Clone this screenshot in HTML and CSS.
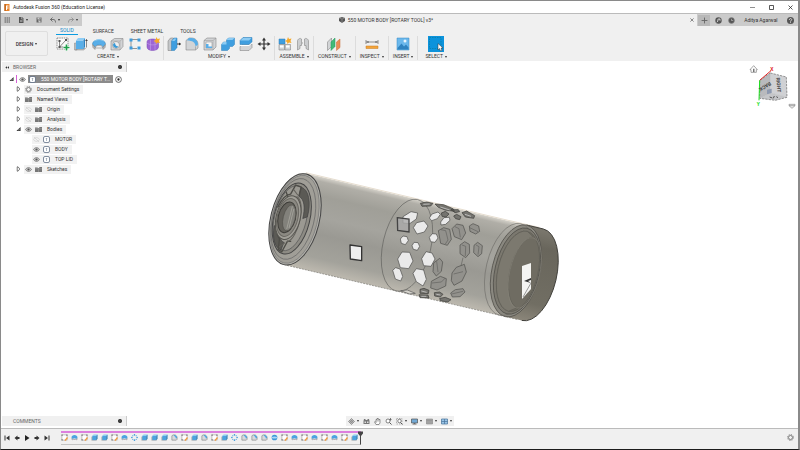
FILE: index.html
```html
<!DOCTYPE html>
<html lang="en">
<head>
    <meta charset="UTF-8">
    <meta name="viewport" content="width=device-width, initial-scale=1.0">
    <title>Autodesk Fusion 360 (Education License)</title>
    <link rel="stylesheet" href="styles.css">
</head>
<body>
    <!-- Icon sprite -->
    <svg class="sprite" aria-hidden="true">
        <symbol id="i-grid" viewBox="0 0 12 12"><path fill="#555" d="M1 1h3v2H1zM5 1h3v2H5zM9 1h3v2H9zM1 5h3v2H1zM5 5h3v2H5zM9 5h3v2H9zM1 9h3v2H1zM5 9h3v2H5zM9 9h3v2H9z"/></symbol>
        <symbol id="i-file" viewBox="0 0 12 12"><path fill="#555" d="M2 0h6l3 3v9H2z"/><path stroke="#ccc" fill="none" d="M7 0v4h4M4 7h5M4 9h5"/></symbol>
        <symbol id="i-save" viewBox="0 0 12 12"><path fill="#666" d="M1 1h10v10H1z"/><path fill="#ccc" d="M3 1h6v4H3zM4 7h5v4H4z"/><path fill="#666" d="M7 2h1v2H7zM5 8h1v3H5z"/></symbol>
        <symbol id="i-undo" viewBox="0 0 12 12"><path fill="none" stroke="#555" stroke-width="1.6" d="M5 1L1 5l4 4M1 5h5c4 0 5 2 5 6"/></symbol>
        <symbol id="i-redo" viewBox="0 0 12 12"><path fill="none" stroke="#888" stroke-width="1.6" d="M7 1l4 4-4 4M11 5H6C2 5 1 7 1 11"/></symbol>
        <symbol id="i-cube" viewBox="0 0 12 12"><path fill="#555" d="M0 2l6-2 6 2v6l-6 4-6-4z"/><path stroke="#aaa" fill="none" d="M0 2l6 2 6-2M6 4v8"/></symbol>
        <symbol id="i-plus" viewBox="0 0 12 12"><path stroke="#666" stroke-width="1.6" d="M6 1v10M1 6h10"/></symbol>
        <symbol id="i-ext" viewBox="0 0 12 12"><circle cx="6" cy="6" r="5.5" fill="#555"/><path fill="none" stroke="#ddd" stroke-width="1.6" d="M3 9l2-2c-1-3 1-5 4-3-2 0-1 2 0 2"/></symbol>
        <symbol id="i-clock" viewBox="0 0 12 12"><circle cx="6" cy="6" r="5" fill="#555" stroke="#888"/><path fill="none" stroke="#ccc" d="M6 3v3h3"/></symbol>
        <symbol id="i-help" viewBox="0 0 12 12"><circle cx="6" cy="6" r="6" fill="#555"/><path fill="none" stroke="#eee" stroke-width="1.4" d="M4 5c0-3 4-3 4-.5C8 6 6 6 6 8M6 9v1.4"/></symbol>

        <symbol id="r-sketch" viewBox="0 0 28 28"><path fill="#fafafa" stroke="#666" stroke-width="1.4" stroke-dasharray="3 1.5" d="M2 2h22v22H2z"/><path fill="none" stroke="#555" stroke-width="1.4" d="M7 20V8M7 20L20 6M7 20h8"/><path fill="#555" d="M5 6h4v4H5zM18 4h4v4h-4zM5 18h4v4H5z"/><path stroke="#fff" stroke-width="6" d="M21 15v13M15 21h13"/><path stroke="#20a04c" stroke-width="3.4" d="M21 15v12M15 21h12"/></symbol>
        <symbol id="r-extrude" viewBox="0 0 28 28"><path fill="#b8babd" stroke="#888" d="M1 12h5v14H1zM3 26l4-3h16l-4 3z"/><path fill="#58aee8" d="M4 7h15v17H4z"/><path fill="#8dccf4" d="M4 7l4-5h14l-3 5z"/><path fill="#2c83c4" d="M19 7l3-5v18l-3 4z"/><path stroke="#555" stroke-width="1.3" d="M25 5v16M23 8l2-3 2 3"/></symbol>
        <symbol id="r-revolve" viewBox="0 0 28 28"><path fill="#58aee8" stroke="#3482b9" d="M1 14C1 3 27 3 27 14l-5 6c-2-6-13-6-16 0z"/><path fill="#8dccf4" d="M4 9C8 2 21 2 24 9 17 5 10 6 4 9z"/><path fill="#f0f0f0" stroke="#777" d="M6 22c2-7 14-7 16 0z"/><path fill="#b8babd" stroke="#777" d="M1 15l5 5v5l-4-4zM27 15l-5 5v5l4-4z"/></symbol>
        <symbol id="r-hole" viewBox="0 0 28 28"><path fill="#d2d4d6" stroke="#777" d="M2 8l7-5h17v16l-6 7H2z"/><path fill="none" stroke="#999" d="M2 8h18v18M20 8l6-5"/><circle cx="12" cy="16" r="7" fill="#eee" stroke="#777"/><path fill="#399ad8" d="M6 16a6 6 0 0 0 11 3c-3 0-7-2-7-7-2 0-4 2-4 4z"/></symbol>
        <symbol id="r-pattern" viewBox="0 0 28 28"><path fill="none" stroke="#777" stroke-width="1.5" d="M22 5H6v18h12"/><path fill="#3d9bdd" d="M3 3h6v6H3zM19 3h6v6h-6zM3 19h6v6H3zM19 19h6v6h-6z"/></symbol>
        <symbol id="r-form" viewBox="0 0 28 28"><path fill="#9c66d4" stroke="#7a45b7" d="M2 10c0-5 7-6 12-6s11 2 11 6v10c0 5-7 7-12 7S2 25 2 20z"/><path fill="none" stroke="#c3a0ea" stroke-width="1.2" d="M2 12c6 5 17 5 23 0M9 5v21M18 5v21"/><path fill="#f7a928" d="M21 0l2 4 5-1-2 5 2 4-5-1-3 3-1-4-4-2 4-2z"/></symbol>
        <symbol id="r-press" viewBox="0 0 28 28"><path fill="#c5c7c9" stroke="#777" d="M2 8l5-6h6v21l-4 4H2z"/><path fill="#3f9edf" stroke="#2d7fb8" d="M9 8l5-6h6v19l-5 6H9z"/><path fill="#8dccf4" d="M10 8l4-5h5l-4 5z"/><path stroke="#333" stroke-width="2" d="M20 14h7"/><path fill="#333" d="M24 11l4 3-4 3z"/></symbol>
        <symbol id="r-fillet" viewBox="0 0 28 28"><path fill="#d2d4d6" stroke="#777" d="M2 26V7l6-5h5c8 0 13 6 13 13v7l-5 4z"/><path fill="#58aee8" d="M8 2h5c8 0 13 6 13 13l-5 4C21 11 15 7 4 7z"/><path fill="none" stroke="#888" d="M21 19v7"/></symbol>
        <symbol id="r-shell" viewBox="0 0 28 28"><path fill="#d2d4d6" stroke="#777" d="M2 7l6-5h18v18l-6 6H2z"/><path fill="#f5f5f5" stroke="#888" d="M6 10h12v12H6z"/><path fill="#58aee8" d="M6 14h5v5h7v3H6z"/><path fill="none" stroke="#999" d="M2 7h18v19M20 7l6-5"/></symbol>
        <symbol id="r-combine" viewBox="0 0 28 28"><path fill="#3f9edf" stroke="#2d7fb8" d="M1 15l4-5h6V6l4-4h12v13l-4 4h-6v4l-4 4H1z"/><path fill="#8dccf4" d="M11 6l4-4h12l-4 4zM1 15l4-5h6v5z"/></symbol>
        <symbol id="r-offset" viewBox="0 0 28 28"><path fill="#d2d4d6" stroke="#777" d="M2 19l6-5h18v7l-6 6H2z"/><path fill="#3f9edf" stroke="#2d7fb8" d="M2 7l6-6h18v9l-6 5H2z"/><path fill="#8dccf4" d="M3 7l5-5h17l-5 5z"/><path fill="#fff" d="M2 16h18l6-5v2l-6 5H2z"/></symbol>
        <symbol id="r-move" viewBox="0 0 28 28"><path stroke="#333" stroke-width="2.4" d="M14 4v20M4 14h20"/><path fill="#333" d="M14 1l4 6h-8zM14 27l4-6h-8zM1 14l6-4v8zM27 14l-6-4v8z"/></symbol>
        <symbol id="r-assemble" viewBox="0 0 28 28"><path fill="#3f9edf" stroke="#2d7fb8" d="M2 4h12v10H2z"/><path fill="#d2d4d6" stroke="#777" d="M2 15h11v11H2zM14 15h11v11H14z"/><path fill="#fff" d="M4 17h7v4H4zM16 17h7v4h-7z"/><path fill="#f7a928" d="M20 0l2 4 5-1-2 5 2 4-5-1-3 3-1-4-4-2 4-2z"/></symbol>
        <symbol id="r-joint" viewBox="0 0 28 28"><path fill="#ccced0" stroke="#777" d="M3 26V8c0-4 6-7 8-4v13H8v6zM25 26V8c0-4-6-7-8-4v13h3v6z"/><path stroke="#555" stroke-dasharray="2 2" d="M12 12h4"/></symbol>
        <symbol id="r-construct" viewBox="0 0 28 28"><path fill="#d2d4d6" stroke="#777" d="M1 10l8-8v17l-8 8z"/><path fill="#42b978" stroke="#259a59" d="M8 10l8-8v17l-8 8z"/><path fill="#eb8c54" stroke="#c86d38" d="M19 10l7-6v17l-7 6z"/></symbol>
        <symbol id="r-measure" viewBox="0 0 28 28"><path stroke="#666" stroke-width="1.4" d="M2 6v8M26 6v8M2 10h24"/><path fill="#555" d="M3 10l4-2v4zM25 10l-4-2v4z"/><path fill="#f2a43a" stroke="#c87b1c" d="M2 18h24v5H2z"/></symbol>
        <symbol id="r-image" viewBox="0 0 28 28"><path fill="#6bb8ec" stroke="#368bc7" d="M2 2h24v24H2z"/><path fill="#2f83c0" d="M3 22l8-9 5 6 4-4 5 6v4H3z"/><circle cx="18" cy="8" r="3" fill="#e9f6fd"/></symbol>
        <symbol id="r-select" viewBox="0 0 32 32"><path fill="#0c93dc" d="M0 0h32v32H0z"/><path fill="none" stroke="#077a9f" stroke-width="1.3" stroke-dasharray="3 2" d="M3 3h23v22H3z"/><path fill="#fff" stroke="#333" d="M20 15v13l3-3 2 5 3-1-2-5h4z"/></symbol>

        <symbol id="b-eye" viewBox="0 0 14 10"><path fill="#ccc" stroke="#666" stroke-width="1.4" d="M1 5c3-5 9-5 12 0-3 5-9 5-12 0z"/><circle cx="7" cy="5" r="2.2" fill="#555"/></symbol>
        <symbol id="b-hidden" viewBox="0 0 14 10"><path fill="none" stroke="#ccc" stroke-width="1.3" d="M1 5c3-5 9-5 12 0-3 5-9 5-12 0zM2 0l10 10"/></symbol>
        <symbol id="b-folder" viewBox="0 0 14 12"><path fill="#777" d="M0 2h5l1 1h2l1-2h5v10H0z"/><path stroke="#aaa" d="M0 4.500h14M7 5v6"/></symbol>
        <symbol id="b-gear" viewBox="0 0 14 14"><circle cx="7" cy="7" r="4" fill="none" stroke="#666" stroke-width="1.6"/><circle cx="7" cy="7" r="6" fill="none" stroke="#666" stroke-width="1.8" stroke-dasharray="2 2.700"/></symbol>
        <symbol id="b-body" viewBox="0 0 14 14"><rect x="1" y="1" width="12" height="12" rx="3" fill="#fff" stroke="#4d5f78" stroke-width="1.4"/><path stroke="#678" d="M7 5v5M5.500 5h3"/></symbol>
        <symbol id="b-closed" viewBox="0 0 10 14"><path fill="#fff" stroke="#333" stroke-width="1.5" d="M2 2h2l4 5-4 5H2z"/></symbol>
        <symbol id="b-open" viewBox="0 0 12 12"><path fill="#333" d="M11 1v10H1z"/><path fill="#ddd" d="M8 5.500v3.300H5z"/></symbol>
        <symbol id="b-dot" viewBox="0 0 12 12"><circle cx="6" cy="6" r="5" fill="#fff" stroke="#444" stroke-width="1.3"/><circle cx="6" cy="6" r="2" fill="#222"/></symbol>
        <symbol id="b-pin" viewBox="0 0 12 12"><circle cx="6" cy="6" r="6" fill="#222"/><path stroke="#bbb" d="M4 6h4M6 4v4"/></symbol>

        <symbol id="t-sketch" viewBox="0 0 16 16"><path fill="#fff" stroke="#999" stroke-width="1.3" d="M2 2h12v12H2z"/><path fill="#777" d="M1 1h3v3H1zM12 1h3v3h-3zM1 12h3v3H1z"/><path stroke="#f29a3b" stroke-width="3" d="M9 15l6-7"/></symbol>
        <symbol id="t-extrude" viewBox="0 0 16 16"><path fill="#aaa" d="M1 6h12v9H1z"/><path fill="#4ba3e0" d="M3 4h9v10H3z"/><path fill="#83c6f2" d="M3 4l3-3h9l-3 3z"/><path fill="#2f80ba" d="M12 4l3-3v10l-3 3z"/></symbol>
        <symbol id="t-revolve" viewBox="0 0 16 16"><path fill="#4ba3e0" d="M1 8c0-8 14-8 14 0l-3 4c-2-3-6-3-8 0z"/><path fill="#999ca0" d="M1 9l3 3v3l-3-3zM15 9l-3 3v3l3-3zM4 13c2-3 6-3 8 0z"/></symbol>
        <symbol id="t-pattern" viewBox="0 0 16 16"><g fill="#3c98d9"><circle cx="8" cy="2" r="1.800"/><circle cx="8" cy="14" r="1.800"/><circle cx="2" cy="8" r="1.800"/><circle cx="14" cy="8" r="1.800"/><circle cx="4" cy="4" r="1.400"/><circle cx="12" cy="4" r="1.400"/><circle cx="4" cy="12" r="1.400"/><circle cx="12" cy="12" r="1.400"/></g></symbol>
        <symbol id="t-fillet" viewBox="0 0 16 16"><path fill="#d8dadc" stroke="#777" stroke-width="1.3" d="M2 14V4l3-2h3c4 0 6 4 6 7v3l-2 2z"/><path fill="#4ba5e1" d="M7 2c5 0 7 4 7 7l-3 1c0-3-2-5-5-6z"/></symbol>
        <symbol id="t-sphere" viewBox="0 0 16 16"><circle cx="8" cy="8" r="6.500" fill="#3c98d9"/><path fill="#a9d8f5" d="M2 7c3-2 9-2 12 0v2c-3 2-9 2-12 0z"/></symbol>
        <symbol id="p-start" viewBox="0 0 12 12"><path fill="#333" d="M1 1h2v10H1zM11 1v10L4 6z"/></symbol>
        <symbol id="p-prev" viewBox="0 0 12 12"><path fill="#333" d="M7 1v3h4v4H7v3L1 6z"/></symbol>
        <symbol id="p-play" viewBox="0 0 12 12"><path fill="#222" d="M2 0l9 6-9 6z"/></symbol>
        <symbol id="p-next" viewBox="0 0 12 12"><path fill="#333" d="M5 1v3H1v4h4v3l6-5z"/></symbol>
        <symbol id="p-end" viewBox="0 0 12 12"><path fill="#333" d="M9 1h2v10H9zM1 1v10l7-5z"/></symbol>

        <symbol id="n-orbit" viewBox="0 0 14 14"><path fill="none" stroke="#666" stroke-width="1.3" d="M7 1l6 6-6 6-6-6z"/><path stroke="#666" d="M7 3v8M3 7h8"/><circle cx="7" cy="7" r="2.500" fill="#aaa" stroke="#666"/></symbol>
        <symbol id="n-look" viewBox="0 0 14 14"><path fill="#777" d="M2 2h3v2h4V2h3l1 4v6H1V6z"/><path fill="#ddd" d="M3 7h3v3H3zM8 7h3v3H8z"/></symbol>
        <symbol id="n-pan" viewBox="0 0 14 14"><path fill="#fff" stroke="#555" stroke-width="1.200" d="M4 13L1 8l1-1 2 2V3h2V1h2v1h2v1h2v7l-2 3z"/><path stroke="#777" d="M6 3v4M8 2v5M10 3v4"/></symbol>
        <symbol id="n-zoom" viewBox="0 0 14 14"><circle cx="6" cy="6" r="4" fill="#fff" stroke="#555" stroke-width="1.400"/><path stroke="#555" stroke-width="2" d="M9 9l4 4"/><path stroke="#555" d="M11 1v5M9 3l2-2 2 2"/></symbol>
        <symbol id="n-fit" viewBox="0 0 14 14"><path fill="none" stroke="#777" stroke-dasharray="3 2" d="M1 1h11v11H1z"/><circle cx="7" cy="6" r="3.500" fill="#fff" stroke="#555" stroke-width="1.400"/><path stroke="#555" stroke-width="2" d="M9 9l4 4"/></symbol>
        <symbol id="n-display" viewBox="0 0 14 14"><path fill="#73a9d4" stroke="#555" stroke-width="1.400" d="M1 2h12v8H1z"/><path fill="#666" d="M5 10h4v2h2v1H3v-1h2z"/></symbol>
        <symbol id="n-gridset" viewBox="0 0 14 14"><path fill="#aaa" stroke="#777" d="M1 2h12v10H1z"/><path stroke="#888" d="M1 5h12M1 8h12"/></symbol>
        <symbol id="n-views" viewBox="0 0 14 14"><path fill="#9bc5e7" stroke="#46729b" stroke-width="1.400" d="M1 2h12v10H1zM7 2v10M1 7h12"/></symbol>
    </svg>

    <div class="app">
        <header class="title-bar">
            <svg class="logo" viewBox="0 0 12 14"><path fill="#e8832a" d="M1 0h10v14H1z"/><path fill="#fff" d="M4 3h5v2H6v2h3v2H6v3H4z"/><path fill="#a9520f" d="M1 0h2v14H1z"/></svg>
            <h1 class="app-name">Autodesk Fusion 360 (Education License)</h1>
            <div class="window-btns">
                <button aria-label="Minimize"><svg viewBox="0 0 10 10"><path stroke="#222" d="M0 5h10"/></svg></button>
                <button aria-label="Maximize"><svg viewBox="0 0 10 10"><path fill="none" stroke="#222" stroke-width="1.500" d="M1 1h8v8H1z"/></svg></button>
                <button aria-label="Close"><svg viewBox="0 0 10 10"><path stroke="#222" stroke-width="1.500" d="M1 1l8 8M9 1L1 9"/></svg></button>
            </div>
        </header>

        <div class="doc-bar">
            <div class="quick">
                <button aria-label="Data panel"><svg><use href="#i-grid"/></svg></button>
                <button class="has-menu" aria-label="File"><svg><use href="#i-file"/></svg></button>
                <button aria-label="Save"><svg><use href="#i-save"/></svg></button>
                <button class="has-menu" aria-label="Undo"><svg><use href="#i-undo"/></svg></button>
                <button class="has-menu" aria-label="Redo"><svg><use href="#i-redo"/></svg></button>
            </div>
            <div class="doc-tab">
                <span class="doc-name"><svg><use href="#i-cube"/></svg>550 MOTOR BODY [ROTARY TOOL] v3*</span>
                <button class="doc-close" aria-label="Close tab"><svg viewBox="0 0 10 10"><path stroke="#444" stroke-width="1.500" d="M1 1l8 8M9 1L1 9"/></svg></button>
            </div>
            <div class="account">
                <button class="add" aria-label="New design"><svg><use href="#i-plus"/></svg></button>
                <button aria-label="Extensions"><svg><use href="#i-ext"/></svg></button>
                <button aria-label="Job status"><svg><use href="#i-clock"/></svg></button>
                <a class="user" href="#">Aditya Agarwal</a>
                <button aria-label="Help"><svg><use href="#i-help"/></svg></button>
            </div>
        </div>

        <div class="ribbon">
            <button class="workspace-btn has-menu">DESIGN</button>
            <div class="ribbon-main">
                <nav class="tabs">
                    <button class="tab active">SOLID</button>
                    <button class="tab">SURFACE</button>
                    <button class="tab">SHEET METAL</button>
                    <button class="tab">TOOLS</button>
                </nav>
                <div class="groups">
                    <div class="group">
                        <div class="tools">
                            <button aria-label="Create sketch"><svg><use href="#r-sketch"/></svg></button>
                            <button aria-label="Extrude"><svg><use href="#r-extrude"/></svg></button>
                            <button aria-label="Revolve"><svg><use href="#r-revolve"/></svg></button>
                            <button aria-label="Hole"><svg><use href="#r-hole"/></svg></button>
                            <button aria-label="Pattern"><svg><use href="#r-pattern"/></svg></button>
                            <button aria-label="Create form"><svg><use href="#r-form"/></svg></button>
                        </div>
                        <button class="group-name has-menu">CREATE</button>
                    </div>
                    <div class="group">
                        <div class="tools">
                            <button aria-label="Press pull"><svg><use href="#r-press"/></svg></button>
                            <button aria-label="Fillet"><svg><use href="#r-fillet"/></svg></button>
                            <button aria-label="Shell"><svg><use href="#r-shell"/></svg></button>
                            <button aria-label="Combine"><svg><use href="#r-combine"/></svg></button>
                            <button aria-label="Offset face"><svg><use href="#r-offset"/></svg></button>
                            <button aria-label="Move"><svg><use href="#r-move"/></svg></button>
                        </div>
                        <button class="group-name has-menu">MODIFY</button>
                    </div>
                    <div class="group">
                        <div class="tools">
                            <button aria-label="New component"><svg><use href="#r-assemble"/></svg></button>
                            <button aria-label="Joint"><svg><use href="#r-joint"/></svg></button>
                        </div>
                        <button class="group-name has-menu">ASSEMBLE</button>
                    </div>
                    <div class="group">
                        <div class="tools"><button aria-label="Offset plane"><svg><use href="#r-construct"/></svg></button></div>
                        <button class="group-name has-menu">CONSTRUCT</button>
                    </div>
                    <div class="group">
                        <div class="tools"><button aria-label="Measure"><svg><use href="#r-measure"/></svg></button></div>
                        <button class="group-name has-menu">INSPECT</button>
                    </div>
                    <div class="group">
                        <div class="tools"><button aria-label="Insert image"><svg><use href="#r-image"/></svg></button></div>
                        <button class="group-name has-menu">INSERT</button>
                    </div>
                    <div class="group">
                        <div class="tools selected"><button aria-label="Select"><svg><use href="#r-select"/></svg></button></div>
                        <button class="group-name has-menu">SELECT</button>
                    </div>
                </div>
            </div>
        </div>

        <main class="workspace">
            <!-- Motor body model -->
            <svg class="model" viewBox="1 61 797 367" role="img" aria-label="Motor body model">
                <defs>
                    <linearGradient id="shell" x1="0" y1="0" x2="0" y2="1">
                        <stop offset="0" stop-color="#d5d2ca"/>
                        <stop offset=".05" stop-color="#b0aea7"/>
                        <stop offset=".2" stop-color="#a09f98"/>
                        <stop offset=".42" stop-color="#a5a49e"/>
                        <stop offset=".6" stop-color="#9a9993"/>
                        <stop offset=".85" stop-color="#a3a29b"/>
                        <stop offset="1" stop-color="#bdb9af"/>
                    </linearGradient>
                    <linearGradient id="lid" x1="0" y1="0" x2="0" y2="1">
                        <stop offset="0" stop-color="#7b786e"/>
                        <stop offset=".2" stop-color="#69665c"/>
                        <stop offset=".8" stop-color="#716e63"/>
                        <stop offset="1" stop-color="#8b867a"/>
                    </linearGradient>
                </defs>
                <g transform="translate(295 219) rotate(13.200)">
                    <path fill="url(#shell)" d="M0-47H227A24 47 0 0 1 227 47H0A24 47 0 0 1 0-47z"/>
                    <path fill="none" stroke="#e6ddcf" d="M0-47.500H240"/>
                    <path fill="none" stroke="#77756e" stroke-dasharray="2 1" stroke-width=".6" d="M0 47H240"/>
                    <path fill="url(#lid)" d="M227-47H244A24 47 0 0 1 244 47H227z"/>
                    <path fill="none" stroke="#3e3d38" stroke-width=".9" d="M227-47H244A24 47 0 0 1 244 47"/>
                    <ellipse cx="227" rx="24" ry="47" fill="#8a8880" stroke="#55534d" stroke-width=".8"/>
                    <ellipse cx="221" rx="24" ry="47" fill="none" stroke="#6e6d68" stroke-width=".6"/>
                    <ellipse cx="228" rx="22" ry="44" fill="#7b786f" stroke="#4b4a45" stroke-width=".7"/>
                    <ellipse cx="229" rx="20" ry="41" fill="#6f6c62" stroke="#5e5c55" stroke-width=".7"/>
                    <path fill="#7c796f" stroke="#5f5d56" stroke-width=".6" d="M229-41A20 41 0 0 0 229 41L236 36A18 37 0 0 1 236-37z"/>
                    <ellipse cx="236" rx="15" ry="36" fill="none" stroke="#878479" stroke-width=".6"/>
                    <ellipse cx="115" rx="24" ry="47" fill="none" stroke="#5d5d5a" stroke-width=".6"/>
                </g>
                <!-- Window in the lid -->
                <path fill="#f4f4f2" d="M522 266l9-3v26l-9 10z"/>
                <path fill="#333" d="M524 281l7-3v2l-3 1 3 2z"/>
                <path fill="none" stroke="#555" stroke-width=".6" d="M523 297l8-14"/>

                <!-- Motor end -->
                <svg x="260" y="160" width="150" height="120" viewBox="0 0 450 360">
                    <g fill="none" transform="rotate(14 105 178)">
                        <ellipse cx="105" cy="178" rx="73" ry="140" fill="#b3b2ac" stroke="#444" stroke-width="3"/>
                        <ellipse cx="104" cy="178" rx="68" ry="135" fill="#a19f98" stroke="#777" stroke-width="2"/>
                        <ellipse cx="100" cy="178" rx="62" ry="124" fill="#a09e97" stroke="#666" stroke-width="2"/>
                        <ellipse cx="95" cy="178" rx="54" ry="109" fill="#8d8b84" stroke="#444" stroke-width="3"/>
                        <ellipse cx="91" cy="178" rx="48" ry="100" fill="#9b9992" stroke="#555" stroke-width="2"/>
                        <path fill="#5b5a55" stroke="#444" stroke-width="2" d="M99 80c25 0 42 40 40 82l-12 8c0-30-8-58-28-62zM49 212c4 40 17 62 38 65l2-24c-14-2-22-22-25-46z"/>
                        <path stroke="#4d4c47" stroke-width="4" d="M59 104l13 20M46 156c5-25 15-44 28-48l8-30 18 2v27M64 234l10 12 4 32 12 4 9-35 11-2"/>
                        <path stroke="#64625c" stroke-width="3" d="M93 110c34 8 36 122 5 140M79 92l17 14M79 270l14-17"/>
                        <ellipse cx="84" cy="178" rx="36" ry="67" fill="#a09e97" stroke="#55544f" stroke-width="3"/>
                        <ellipse cx="82" cy="178" rx="31" ry="58" fill="#8b8982" stroke="#6b6963" stroke-width="3"/>
                        <ellipse cx="80" cy="178" rx="26" ry="47" fill="#65635d" stroke="#3d3c38" stroke-width="3"/>
                        <ellipse cx="87" cy="178" rx="18" ry="40" fill="#82817b" stroke="#53514c" stroke-width="2"/>
                        <path stroke="#aeaca4" stroke-width="2" d="M88 142v70M94 148v60"/>
                    </g>
                    <path fill="#eee" stroke="#333" stroke-width="4" stroke-linejoin="round" d="M270 255l35 5v42l-34-5z"/>
                </svg>

                <!-- Vent pattern -->
                <svg x="375" y="190" width="120" height="120" viewBox="0 0 360 360">
                    <g fill="#eaeaea" stroke="#4a4a48" stroke-width="2">
                        <path d="M84 80l24-15 20 4-4 18-20 14-20-2z"/>
                        <path d="M115 113l10-15 22-5 12 15-11 18-22 6z"/>
                        <path d="M76 147l8-9 12 2 4 12-9 12-12-4z"/>
                        <path d="M111 167l6-10 12 1 5 11-7 12-12-3z"/>
                        <path d="M68 207l13-21 23 1 10 26-13 23-25-3z"/>
                        <path d="M140 206l13-21 18 4 9 18-12 22-22-2z"/>
                        <path d="M53 241l9-8 13 4 8 22-6 14-16-6z"/>
                        <path d="M114 250l10-14 22 4 8 28-10 20-20-13z"/>
                        <path d="M163 142l9-11 12 1 5 12-9 13-13-2z"/>
                        <path d="M163 84l8-12 18-6 7 7-9 13-17 6z"/>
                        <path d="M197 96l10-13 16-1 2 9-13 12-14 2z"/>
                    </g>
                    <path fill="#aaa" fill-opacity=".8" stroke="#444" stroke-width="4" d="M67 83l35 4v39l-34-5z"/>
                    <g fill="#92918c" stroke="#4d4d4a" stroke-width="2">
                        <path d="M190 122l16-9 18 5 5 30-12 18-20-6z"/>
                        <path d="M231 116l14-14 19 4 8 23-12 20-22-9z"/>
                        <path d="M283 108l11-7 17 7 3 16-12 8-17-8z"/>
                        <path d="M255 165l14-10 14 8 1 26-12 14-17-12z"/>
                        <path d="M297 166l11-9 14 10-2 24-11 9-13-12z"/>
                        <path d="M231 249l13-17 24-9 6 23-13 27-24 13-8-14z"/>
                        <path d="M176 219l18-14 9 11-4 28-15 14-10-13z"/>
                        <path d="M169 274l27-15 18 7-2 22-26 12-19-6z"/>
                        <path d="M227 309l14-10 23-3 6 10-15 14-23 1z"/>
                    </g>
                    <g fill="none" stroke="#62625f" stroke-width="2">
                        <path d="M198 119l14 3 7 28-8 12M240 110l12 6 4 26M261 165l11 4-1 29M303 165l9 5-3 24M236 252l28-7M185 214l4 32M171 279l28-3 12-12M264 203l-6 25M284 113l25 12M230 312l34-8"/>
                    </g>
                    <g fill="#75746f" stroke="#3a3a37" stroke-width="2">
                        <path d="M136 40l19-4 19 4-7 8-26 1zM180 42l26 2 28 12 4 8-28-4-20-8zM199 69l12-5 11 8-9 9-12-2zM228 59h22l4 6-14 3zM261 68l14-5 24 14-3 8-25-4zM236 78l9-5 13 7-4 9-12-3z"/>
                        <path d="M135 298l12-3 15 6-2 10-25-1zM178 308l16-2 10 7-8 8-17-3zM194 325l17-3 17 7-10 7-22-4zM132 314l27 1 3 9-27-1z"/>
                    </g>
                    <path fill="#d4d2cb" stroke="#555" stroke-width="2" d="M77 302l20-2 24 10-18 2z"/>
                    <path fill="none" stroke="#ddd" stroke-width="2" d="M145 43l19-1M196 51l28 9M270 73l18 6M139 303l16 4M184 313l12 2M139 319h15"/>
                </svg>
            </svg>

            <aside class="browser">
                <div class="panel-head">
                    <svg class="chev" viewBox="0 0 12 8"><path fill="#333" d="M6 0v8L1 4zM12 0v8L7 4z"/></svg>
                    <h2>BROWSER</h2>
                    <button aria-label="Pin browser"><svg><use href="#b-pin"/></svg></button>
                </div>
                <ul class="tree">
                    <li class="row root">
                        <svg class="arrow"><use href="#b-open"/></svg>
                        <span class="mark"></span>
                        <svg class="icon"><use href="#b-eye"/></svg>
                        <span class="pill"><svg class="icon"><use href="#b-body"/></svg><span>550 MOTOR BODY [ROTARY T...</span></span>
                        <svg class="icon"><use href="#b-dot"/></svg>
                    </li>
                    <li class="row"><svg class="arrow"><use href="#b-closed"/></svg><span class="pill"><svg class="icon"><use href="#b-gear"/></svg><span>Document Settings</span></span></li>
                    <li class="row"><svg class="arrow"><use href="#b-closed"/></svg><span class="pill"><svg class="icon"><use href="#b-folder"/></svg><span>Named Views</span></span></li>
                    <li class="row"><svg class="arrow"><use href="#b-closed"/></svg><span class="pill"><svg class="icon"><use href="#b-hidden"/></svg><svg class="icon"><use href="#b-folder"/></svg><span>Origin</span></span></li>
                    <li class="row"><svg class="arrow"><use href="#b-closed"/></svg><span class="pill"><svg class="icon"><use href="#b-hidden"/></svg><svg class="icon"><use href="#b-folder"/></svg><span>Analysis</span></span></li>
                    <li class="row"><svg class="arrow"><use href="#b-open"/></svg><span class="pill"><svg class="icon"><use href="#b-eye"/></svg><svg class="icon"><use href="#b-folder"/></svg><span>Bodies</span></span></li>
                    <li class="row child"><span class="pill"><svg class="icon"><use href="#b-hidden"/></svg><svg class="icon"><use href="#b-body"/></svg><span>MOTOR</span></span></li>
                    <li class="row child"><span class="pill"><svg class="icon"><use href="#b-eye"/></svg><svg class="icon"><use href="#b-body"/></svg><span>BODY</span></span></li>
                    <li class="row child"><span class="pill"><svg class="icon"><use href="#b-eye"/></svg><svg class="icon"><use href="#b-body"/></svg><span>TOP LID</span></span></li>
                    <li class="row"><svg class="arrow"><use href="#b-closed"/></svg><span class="pill"><svg class="icon"><use href="#b-eye"/></svg><svg class="icon"><use href="#b-folder"/></svg><span>Sketches</span></span></li>
                </ul>
            </aside>

            <!-- View cube -->
            <svg class="view-cube" viewBox="0 0 150 150">
                <path fill="#fff" stroke="#777" stroke-width="2" d="M9 26l11-12 11 12h-3v8H12v-8z"/>
                <path fill="#333" d="M19 23h3v10h-3z"/>
                <path fill="#b9babd" d="M38 58l32-22v60l-32 16z"/>
                <path fill="#d0d1d4" d="M70 36l48 12 2 61-50-13z"/>
                <path fill="#c5c6c9" d="M38 112l32-16 50 13-35 9z"/>
                <path fill="none" stroke="#666" stroke-width="2" stroke-dasharray="7 3" d="M70 36l48 12 2 61-35 9-47-6V58z"/>
                <path fill="none" stroke="#aaa" d="M70 36v60l-32 16M70 96l50 13"/>
                <path fill="#8d99b0" d="M60 86l14-3v13l-14 4z"/>
                <path fill="none" stroke="#e02424" stroke-width="3" d="M38 58l34-29"/>
                <path fill="none" stroke="#1de01d" stroke-width="3" d="M38 58l-2 60"/>
                <text class="axis-x" x="70" y="30">X</text>
                <text class="axis-y" x="29" y="136">Y</text>
                <text class="face" transform="translate(88 50) rotate(86)">RIGHT</text>
                <text class="face" transform="translate(68 62) rotate(148)">BACK</text>
                <path fill="none" stroke="#555" stroke-width="3" d="M68 108l8 3M82 105l-3 7M88 107l5 3"/>
                <path fill="#eee" stroke="#888" stroke-width="2" d="M126 130h18v4l-9 8-9-8zM126 134h18"/>
            </svg>

            <div class="comments panel-head">
                <h2>COMMENTS</h2>
                <button aria-label="Add comment"><svg><use href="#b-pin"/></svg></button>
            </div>

            <div class="nav-bar">
                <button class="has-menu" aria-label="Orbit"><svg><use href="#n-orbit"/></svg></button>
                <button aria-label="Look at"><svg><use href="#n-look"/></svg></button>
                <button aria-label="Pan"><svg><use href="#n-pan"/></svg></button>
                <button aria-label="Zoom"><svg><use href="#n-zoom"/></svg></button>
                <button class="has-menu" aria-label="Fit"><svg><use href="#n-fit"/></svg></button>
                <button class="has-menu" aria-label="Display settings"><svg><use href="#n-display"/></svg></button>
                <button class="has-menu" aria-label="Grid and snaps"><svg><use href="#n-gridset"/></svg></button>
                <button class="has-menu" aria-label="Viewports"><svg><use href="#n-views"/></svg></button>
            </div>
        </main>

        <footer class="timeline">
            <div class="playback">
                <button aria-label="Go to start"><svg><use href="#p-start"/></svg></button>
                <button aria-label="Step back"><svg><use href="#p-prev"/></svg></button>
                <button aria-label="Play"><svg><use href="#p-play"/></svg></button>
                <button aria-label="Step forward"><svg><use href="#p-next"/></svg></button>
                <button aria-label="Go to end"><svg><use href="#p-end"/></svg></button>
            </div>
            <div class="features">
                <svg><use href="#t-sketch"/></svg>
                <svg><use href="#t-revolve"/></svg>
                <svg><use href="#t-sketch"/></svg>
                <svg><use href="#t-extrude"/></svg>
                <svg><use href="#t-extrude"/></svg>
                <svg><use href="#t-sketch"/></svg>
                <svg><use href="#t-revolve"/></svg>
                <svg><use href="#t-pattern"/></svg>
                <svg><use href="#t-extrude"/></svg>
                <svg><use href="#t-extrude"/></svg>
                <svg><use href="#t-extrude"/></svg>
                <svg><use href="#t-fillet"/></svg>
                <svg><use href="#t-sketch"/></svg>
                <svg><use href="#t-extrude"/></svg>
                <svg><use href="#t-fillet"/></svg>
                <svg><use href="#t-sketch"/></svg>
                <svg><use href="#t-extrude"/></svg>
                <svg><use href="#t-pattern"/></svg>
                <svg><use href="#t-fillet"/></svg>
                <svg><use href="#t-fillet"/></svg>
                <svg><use href="#t-fillet"/></svg>
                <svg><use href="#t-sphere"/></svg>
                <svg><use href="#t-sketch"/></svg>
                <svg><use href="#t-revolve"/></svg>
                <svg><use href="#t-sketch"/></svg>
                <svg><use href="#t-revolve"/></svg>
                <svg><use href="#t-sketch"/></svg>
                <svg><use href="#t-revolve"/></svg>
                <svg><use href="#t-sketch"/></svg>
                <svg><use href="#t-extrude"/></svg>
            </div>
            <svg class="marker" viewBox="0 0 10 26"><path fill="#444" d="M0 0h10v4L6 9v17H4V9L0 4z"/></svg>
            <button class="settings" aria-label="Timeline settings"><svg><use href="#b-gear"/></svg></button>
        </footer>
    </div>
</body>
</html>
```

FILE: styles.css
```css
* { margin: 0; padding: 0; box-sizing: border-box; }
body {
    font-family: Roboto, "Liberation Sans", sans-serif;
    font-size: 5px;
    line-height: 8px;
    color: #333;
    background: #fff;
}

button {
    display: flex;
    align-items: center;
    justify-content: center;
    border: none;
    background: none;
    font: inherit;
    color: inherit;
    cursor: pointer;
}

h1, h2 { font-size: 5px; font-weight: 400; }
svg { display: block; flex: none; }
.sprite { display: none; }

.app {
    display: flex;
    flex-direction: column;
    min-height: 100vh;
    border: 1px solid #8a8a8a;
    border-right-width: 2px;
    border-bottom-color: #1c1c1c;
}

/* small drop-down arrow */
.has-menu::after {
    content: "";
    margin-left: 2px;
    border: 1px solid transparent;
    border-top: 2px solid #333;
    border-bottom: none;
}

.title-bar {
    display: flex;
    align-items: center;
    height: 12px;
    padding: 0 5px 0 3px;
}
.logo { width: 6px; height: 7px; margin-right: 3px; }
.app-name { flex: 1; color: #222; }
.window-btns { display: flex; gap: 14px; }
.window-btns svg { width: 5px; height: 5px; }

.doc-bar {
    display: flex;
    height: 13px;
    border-top: 1px solid #bbb;
    background: #cbcbcb;
}
.quick {
    display: flex;
    align-items: center;
    gap: 8px;
    width: 81px;
    padding-left: 3px;
}
.quick svg { width: 6px; height: 6px; }
.doc-tab {
    display: flex;
    flex: 1;
    align-items: center;
    padding-right: 3px;
    background: #f0f0f0;
}
.doc-name {
    display: flex;
    flex: 1;
    align-items: center;
    justify-content: center;
    gap: 3px;
}
.doc-name svg { width: 6px; height: 6px; }
.doc-close svg { width: 4px; height: 4px; }
.account {
    display: flex;
    align-items: center;
    justify-content: space-between;
    width: 101px;
    padding: 0 4px 0 1px;
}
.account svg { width: 7px; height: 7px; }
.account .add { width: 12px; height: 11px; background: #b8b8b8; }
.user { padding: 0 4px; color: #333; text-decoration: none; }

.ribbon {
    display: flex;
    height: 35px;
    padding: 0 4px;
    background: #f0f0f0;
}
.workspace-btn {
    align-self: center;
    width: 43px;
    height: 25px;
    border: 1px solid #dedede;
    border-radius: 2px;
    font-weight: 500;
}
.ribbon-main { flex: 1; padding-left: 5px; }
.tabs { display: flex; gap: 13px; height: 9px; padding-left: 3px; }
.tab { padding: 0 2px; line-height: 8px; }
.tab.active {
    padding: 0 4px;
    color: #0a85c9;
    border-bottom: 1px solid #0a9be0;
}
.groups { display: flex; padding-top: 1px; }
.group {
    display: flex;
    flex-direction: column;
    align-items: center;
    justify-content: space-between;
    height: 24px;
    border-right: 1px solid #dcdcdc;
}
.group:last-child { border: none; padding: 0 3px; }
.tools { display: flex; height: 16px; padding: 0 1px; }
.tools button { width: 18px; }
.tools svg { width: 14px; height: 14px; }
.tools.selected svg { width: 16px; height: 16px; }
.group-name { padding: 0 4px; line-height: 7px; }

/* the model fills the workspace, panels lie in the same grid */
.workspace {
    display: grid;
    flex: 1;
    grid-template: 1fr auto / 126px 1fr 57px;
    min-height: 0;
}
.model {
    grid-area: 1 / 1 / 3 / 4;
    width: 100%;
    height: 100%;
}
.browser { grid-area: 1 / 1; padding: 1px 0 0 1px; }
.panel-head {
    display: flex;
    align-items: center;
    height: 10px;
    padding: 0 4px 0 3px;
    background: #f0f0f0;
    border-right: 1px solid #ccc;
}
.panel-head h2 { flex: 1; color: #666; }
.panel-head svg { width: 4px; height: 4px; }
.panel-head .chev { width: 4px; height: 3px; margin-right: 4px; }

.tree { list-style: none; padding-top: 2px; }
.row { display: flex; align-items: center; gap: 3px; height: 10px; padding-left: 14px; }
.row.root { gap: 2px; padding-left: 7px; }
.row.child { padding-left: 30px; }
.arrow { width: 5px; height: 6px; }
.icon { width: 7px; height: 7px; }
.pill {
    display: flex;
    align-items: center;
    gap: 3px;
    height: 9px;
    padding: 0 4px 0 1px;
    background: #f2f2f2;
}
.pill > span { padding-left: 2px; white-space: nowrap; }
.root .pill { height: 8px; padding-right: 3px; background: #8b8b8b; color: #fff; }
.mark { width: 1px; height: 8px; background: #d65fd6; }

.view-cube {
    grid-area: 1 / 3;
    width: 50px;
    height: 50px;
    margin-left: 6px;
}
.view-cube text { font-size: 15px; font-weight: 700; fill: #444; }
.view-cube .axis-x { fill: #e02424; }
.view-cube .axis-y { fill: #1de01d; }

.comments { grid-area: 2 / 1; margin: 0 0 2px 1px; padding-left: 11px; }
.nav-bar {
    grid-area: 2 / 1 / 3 / 4;
    display: flex;
    align-items: center;
    justify-self: center;
    gap: 4px;
    height: 10px;
    margin-bottom: 2px;
    padding: 0 2px;
    background: #f0f0f0;
}
.nav-bar svg { width: 7px; height: 7px; }

.timeline {
    display: flex;
    align-items: center;
    height: 21px;
    padding: 0 4px 3px 3px;
    background: #f0f0f0;
    border-top: 1px solid #bbb;
}
.playback { display: flex; gap: 4px; width: 57px; }
.playback svg { width: 6px; height: 6px; }
.playback button { width: 6px; }
.features {
    display: flex;
    height: 14px;
    padding-top: 1px;
    border-top: 2px solid #dd80de;
    border-bottom: 1px solid #c4c4c4;
}
.features svg { width: 10px; height: 7px; padding-right: 3px; }
.marker { width: 5px; height: 14px; margin-left: -3px; }
.settings { margin-left: auto; }
.settings svg { width: 7px; height: 7px; }
```
